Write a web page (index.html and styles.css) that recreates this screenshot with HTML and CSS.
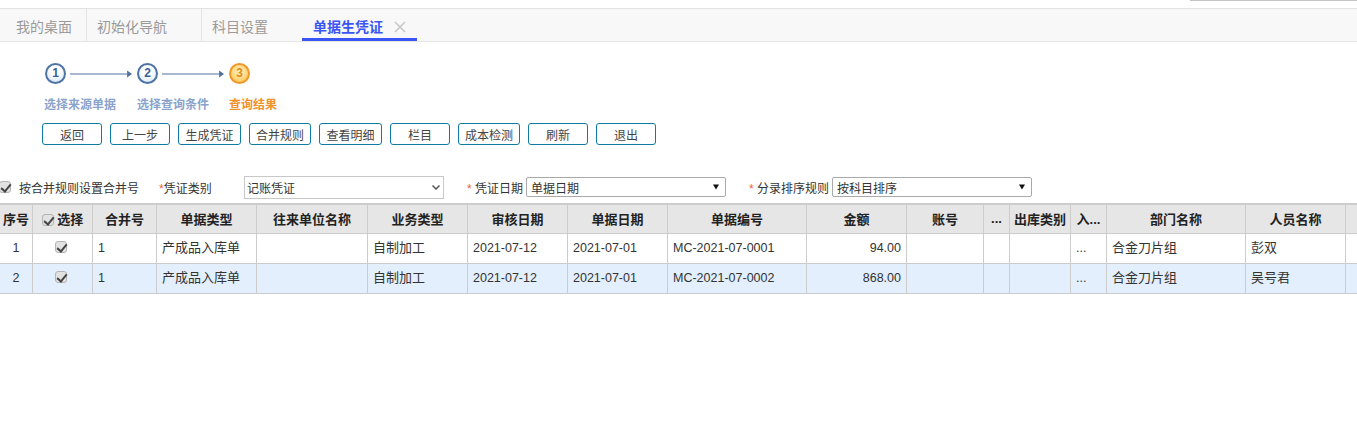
FILE: index.html
```html
<!DOCTYPE html>
<html lang="en">
<head>
    <meta charset="UTF-8">
    <meta name="viewport" content="width=device-width, initial-scale=1.0">
    <title>单据生凭证</title>
    <link rel="stylesheet" href="styles.css">
</head>
<body>
    <!-- Top strip -->
    <div class="top-strip"><div class="top-line"></div></div>

    <!-- Tabs -->
    <div class="tabs">
        <a class="tab tab-first">我的桌面</a>
        <a class="tab tab-second">初始化导航</a>
        <a class="tab tab-third">科目设置</a>
        <a class="tab tab-active">单据生凭证<svg class="tab-close" width="12" height="12" viewBox="0 0 12 12"><path d="M1 1L11 11M11 1L1 11" stroke="#c4c4c4" stroke-width="1.400"/></svg></a>
    </div>

    <!-- Steps -->
    <div class="steps">
        <span class="step-circle">1</span>
        <svg class="step-arrow" width="64" height="10" viewBox="0 0 64 10"><path d="M0 5H58" stroke="#4f6f9f" stroke-width="1"/><path d="M58 1.500L63 5L58 8.500Z" fill="#4f6f9f"/></svg>
        <span class="step-circle">2</span>
        <svg class="step-arrow" width="64" height="10" viewBox="0 0 64 10"><path d="M0 5H58" stroke="#4f6f9f" stroke-width="1"/><path d="M58 1.500L63 5L58 8.500Z" fill="#4f6f9f"/></svg>
        <span class="step-circle step-current">3</span>
    </div>
    <div class="step-labels">
        <span>选择来源单据</span>
        <span>选择查询条件</span>
        <span class="step-label-current">查询结果</span>
    </div>

    <!-- Toolbar -->
    <div class="toolbar">
        <button class="btn">返回</button>
        <button class="btn">上一步</button>
        <button class="btn btn-63">生成凭证</button>
        <button class="btn btn-62">合并规则</button>
        <button class="btn btn-63">查看明细</button>
        <button class="btn">栏目</button>
        <button class="btn btn-62">成本检测</button>
        <button class="btn">刷新</button>
        <button class="btn">退出</button>
    </div>

    <!-- Filters -->
    <div class="filters">
        <input type="checkbox" class="check check-edge" checked>
        <span class="merge-label">按合并规则设置合并号</span>
        <span class="filter-label type-label"><i>*</i>凭证类别</span>
        <div class="select select-flat">
            <span>记账凭证</span>
            <svg width="8" height="5" viewBox="0 0 8 5"><path d="M0.500 0.500L4 4L7.500 0.500" fill="none" stroke="#555" stroke-width="1.500"/></svg>
        </div>
        <span class="filter-label date-label"><i>*</i> 凭证日期</span>
        <div class="select">
            <span>单据日期</span>
            <svg width="6" height="6" viewBox="0 0 6 6"><path d="M0 0.500H6L3 5.500Z" fill="#111"/></svg>
        </div>
        <span class="filter-label sort-label"><i>*</i> 分录排序规则</span>
        <div class="select">
            <span>按科目排序</span>
            <svg width="6" height="6" viewBox="0 0 6 6"><path d="M0 0.500H6L3 5.500Z" fill="#111"/></svg>
        </div>
    </div>

    <!-- Grid -->
    <table class="grid">
        <colgroup>
            <col class="c32"><col class="c60"><col class="c64"><col class="c100"><col class="c111">
            <col class="c100"><col class="c100"><col class="c100"><col class="c139"><col class="c100">
            <col class="c77"><col class="c26"><col class="c61"><col class="c36"><col class="c139">
            <col class="c100"><col>
        </colgroup>
        <thead>
            <tr>
                <th>序号</th>
                <th><input type="checkbox" class="check" checked> 选择</th>
                <th>合并号</th>
                <th>单据类型</th>
                <th>往来单位名称</th>
                <th>业务类型</th>
                <th>审核日期</th>
                <th>单据日期</th>
                <th>单据编号</th>
                <th>金额</th>
                <th>账号</th>
                <th>...</th>
                <th>出库类别</th>
                <th>入...</th>
                <th>部门名称</th>
                <th>人员名称</th>
                <th></th>
            </tr>
        </thead>
        <tbody>
            <tr>
                <td class="center num">1</td>
                <td class="center pick"><input type="checkbox" class="check" checked></td>
                <td class="num">1</td>
                <td>产成品入库单</td>
                <td></td>
                <td>自制加工</td>
                <td class="num">2021-07-12</td>
                <td class="num">2021-07-01</td>
                <td class="num">MC-2021-07-0001</td>
                <td class="right num">94.00</td>
                <td></td>
                <td></td>
                <td></td>
                <td class="num">...</td>
                <td>合金刀片组</td>
                <td>彭双</td>
                <td></td>
            </tr>
            <tr class="selected">
                <td class="center num">2</td>
                <td class="center pick"><input type="checkbox" class="check" checked></td>
                <td class="num">1</td>
                <td>产成品入库单</td>
                <td></td>
                <td>自制加工</td>
                <td class="num">2021-07-12</td>
                <td class="num">2021-07-01</td>
                <td class="num">MC-2021-07-0002</td>
                <td class="right num">868.00</td>
                <td></td>
                <td></td>
                <td></td>
                <td class="num">...</td>
                <td>合金刀片组</td>
                <td>吴号君</td>
                <td></td>
            </tr>
        </tbody>
    </table>
</body>
</html>
```

FILE: styles.css
```css
* {
    margin: 0;
    padding: 0;
    box-sizing: border-box;
}

html, body {
    overflow: hidden;
}

body {
    font-family: "Liberation Sans", "Noto Sans CJK SC", sans-serif;
    font-size: 12px;
    color: #333;
    background-color: #fff;
}

/* Top strip */
.top-strip {
    height: 8px;
    display: flex;
    justify-content: flex-end;
}

.top-line {
    width: 167px;
    height: 1px;
    background-color: #c4c4c4;
}

/* Tabs */
.tabs {
    height: 34px;
    display: flex;
    background-color: #f8f8f8;
    border-top: 1px solid #e2e2e2;
    border-bottom: 1px solid #e6e6e6;
}

.tab {
    height: 32px;
    line-height: 36px;
    font-size: 14px;
    color: #9a9a9a;
    white-space: nowrap;
}

.tab-first {
    width: 86px;
    padding-left: 16px;
}

.tab-second {
    width: 115px;
    padding-left: 10px;
    border-left: 1px solid #e4e4e4;
}

.tab-third {
    width: 101px;
    padding-left: 10px;
    border-left: 1px solid #e4e4e4;
}

.tab-active {
    width: 115px;
    height: 32px;
    padding-left: 11px;
    font-weight: bold;
    color: #3b55f5;
    border-bottom: 3px solid #3b55f5;
}

.tab-close {
    margin-left: 11px;
    vertical-align: -1px;
}

/* Steps */
.steps {
    display: flex;
    align-items: center;
    margin-top: 21px;
    padding-left: 45px;
    height: 21px;
}

.step-circle {
    width: 21px;
    height: 21px;
    border-radius: 50%;
    border: 2px solid #4f73a5;
    background: radial-gradient(circle at 50% 35%, #fff 30%, #cfe3f8 100%);
    color: #3a5f95;
    font-size: 12px;
    font-weight: bold;
    line-height: 17px;
    text-align: center;
}

.step-current {
    border-color: #f0982a;
    background: radial-gradient(circle at 50% 40%, #ffe9a8 25%, #fdbb3c 100%);
    color: #e08a1e;
}

.step-arrow {
    margin: 0 4px 0 4px;
    width: 63px;
}

.step-labels {
    display: flex;
    margin-top: 12px;
    padding-left: 44px;
    height: 18px;
    line-height: 18px;
    font-weight: bold;
    color: #8aa3cc;
}

.step-labels span {
    width: 93px;
}

.step-labels span + span {
    width: 92px;
}

.step-labels .step-label-current {
    color: #f0922e;
}

/* Toolbar */
.toolbar {
    display: flex;
    gap: 8px;
    margin-top: 9px;
    padding-left: 42px;
}

.btn {
    width: 60px;
    height: 22px;
    font-family: inherit;
    font-size: 12px;
    color: #444;
    background-color: #fff;
    border: 1px solid #0f7ba3;
    border-radius: 3px;
}

.btn-62 {
    width: 62px;
}

.btn-63 {
    width: 63px;
}

/* Filters */
.filters {
    display: flex;
    align-items: center;
    height: 24px;
    margin-top: 30px;
}

.check {
    appearance: none;
    display: inline-block;
    position: relative;
    width: 12px;
    height: 12px;
    vertical-align: -2px;
    background-color: #e2e2e2;
    border: 1px solid #b4b4b4;
    border-radius: 3px;
}

.check::after {
    content: "";
    position: absolute;
    left: 3px;
    top: 0;
    width: 4px;
    height: 8px;
    border: solid #444;
    border-width: 0 2px 2px 0;
    transform: rotate(40deg);
}

.check-edge {
    margin-left: -1px;
}

.merge-label {
    margin-left: 8px;
    width: 120px;
}

.filter-label {
    white-space: nowrap;
}

.filter-label i {
    font-style: normal;
    color: #f0603c;
}

.type-label {
    margin-left: 20px;
    width: 85px;
}

.date-label {
    margin-left: 23px;
    width: 59px;
}

.sort-label {
    margin-left: 23px;
    width: 83px;
}

.select {
    display: flex;
    align-items: center;
    justify-content: space-between;
    width: 200px;
    height: 20px;
    padding: 0 6px 0 4px;
    border: 1px solid #a9a9a9;
    border-radius: 2px;
    background-color: #fff;
    color: #333;
}

.select-flat {
    height: 23px;
    padding: 0 3px 0 2px;
    border-color: #c8c8c8;
    border-radius: 0;
}

/* Grid */
.grid {
    width: 1357px;
    margin-top: 4px;
    table-layout: fixed;
    border-collapse: collapse;
    border-top: 2px solid #ccc;
}

.c26 { width: 26px; }
.c32 { width: 32.500px; }
.c36 { width: 36px; }
.c60 { width: 60px; }
.c61 { width: 61px; }
.c64 { width: 64px; }
.c77 { width: 77px; }
.c100 { width: 100px; }
.c111 { width: 111px; }
.c139 { width: 139px; }

.grid th,
.grid td {
    border: 1px solid #ccc;
    font-size: 13px;
    white-space: nowrap;
    overflow: hidden;
}

.grid tr > :first-child {
    border-left: 0;
}

.grid tr > :last-child {
    border-right: 0;
}

.grid th {
    height: 29px;
    padding-bottom: 1px;
    background-color: #e6e6e6;
    color: #222;
    font-weight: bold;
    text-align: center;
}

.grid td {
    height: 30px;
    padding: 0 5px 3px;
}

.grid td.num {
    padding-bottom: 0;
    font-size: 12.500px;
}

.grid td.center {
    padding-left: 0;
    padding-right: 0;
    text-align: center;
}

.grid td.pick {
    padding-right: 3px;
}

.grid td.right {
    text-align: right;
}

.selected td {
    background-color: #e3effd;
}
```
